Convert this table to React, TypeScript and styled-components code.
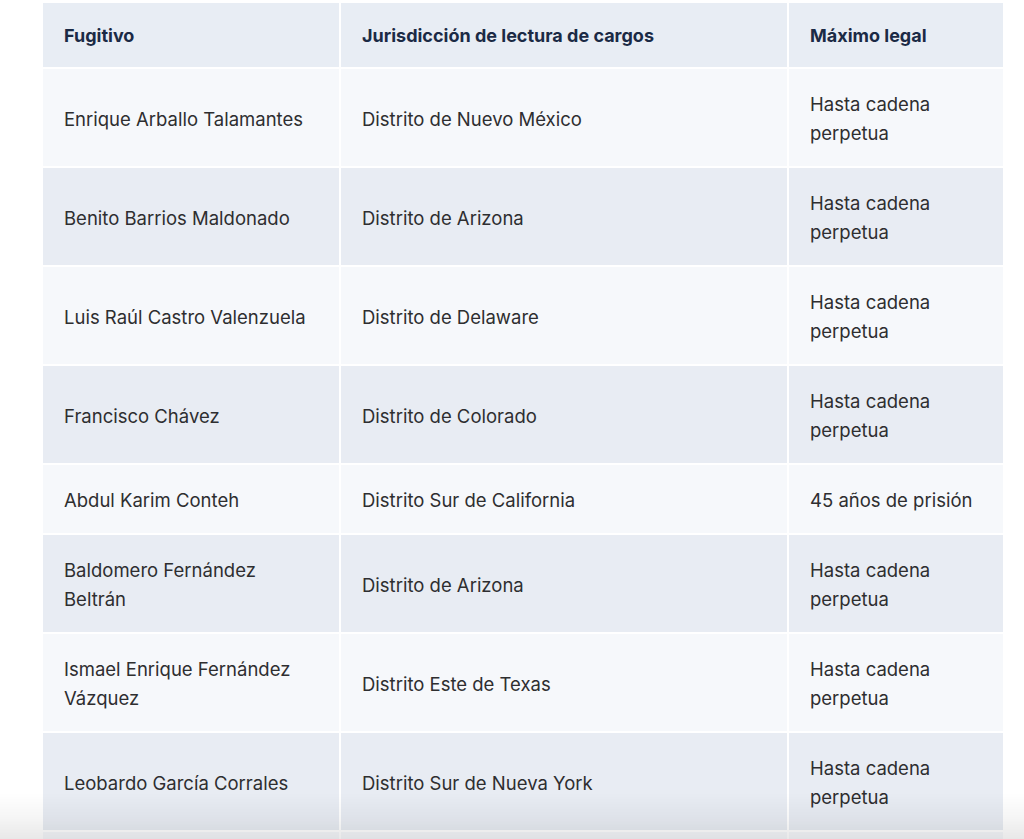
import * as React from "react";
import styled, { createGlobalStyle } from "styled-components";

const GlobalStyle = createGlobalStyle`
  html, body {
    margin: 0;
    padding: 0;
    background: #ffffff;
  }
  body {
    font-family: "Inter", "Noto Sans", sans-serif;
    -webkit-font-smoothing: antialiased;
  }
`;

const Page = styled.div`
  padding: 3px 21px 0 43px;
  height: 839px;
  overflow: hidden;
  box-sizing: border-box;
`;

const Table = styled.div`
  display: grid;
  grid-template-columns: 296px 446px 214px;
  gap: 2px;
  background: #ffffff;
`;

const HeadCell = styled.div`
  background: #e8edf4;
  color: #1b2a45;
  font-weight: 700;
  font-size: 18px;
  line-height: 28px;
  padding: 19px 21px 17px;
`;

const Cell = styled.div<{ $shade: boolean }>`
  display: flex;
  align-items: center;
  background: ${(p) => (p.$shade ? "#e8ecf3" : "#f6f8fb")};
  color: #2e2e30;
  font-size: 18.5px;
  line-height: 29px;
  padding: 21px 21px 18px;
  min-height: 29px;
`;

const BottomFade = styled.div`
  position: fixed;
  left: 0;
  right: 0;
  bottom: 0;
  height: 46px;
  pointer-events: none;
  background: linear-gradient(
    to bottom,
    rgba(0, 0, 0, 0) 0%,
    rgba(0, 0, 0, 0.04) 55%,
    rgba(0, 0, 0, 0.09) 100%
  );
`;

interface IRow {
  name: string;
  district: string;
  max: string;
}

const rows: IRow[] = [
  { name: "Enrique Arballo Talamantes", district: "Distrito de Nuevo México", max: "Hasta cadena perpetua" },
  { name: "Benito Barrios Maldonado", district: "Distrito de Arizona", max: "Hasta cadena perpetua" },
  { name: "Luis Raúl Castro Valenzuela", district: "Distrito de Delaware", max: "Hasta cadena perpetua" },
  { name: "Francisco Chávez", district: "Distrito de Colorado", max: "Hasta cadena perpetua" },
  { name: "Abdul Karim Conteh", district: "Distrito Sur de California", max: "45 años de prisión" },
  { name: "Baldomero Fernández Beltrán", district: "Distrito de Arizona", max: "Hasta cadena perpetua" },
  { name: "Ismael Enrique Fernández Vázquez", district: "Distrito Este de Texas", max: "Hasta cadena perpetua" },
  { name: "Leobardo García Corrales", district: "Distrito Sur de Nueva York", max: "Hasta cadena perpetua" },
  { name: "", district: "", max: "" },
];

export default function App() {
  return (
    <>
      <GlobalStyle />
      <Page>
        <Table>
          <HeadCell>Fugitivo</HeadCell>
          <HeadCell>Jurisdicción de lectura de cargos</HeadCell>
          <HeadCell>Máximo legal</HeadCell>
          {rows.map((r, i) => (
            <React.Fragment key={i}>
              <Cell $shade={i % 2 === 1}>{r.name}</Cell>
              <Cell $shade={i % 2 === 1}>{r.district}</Cell>
              <Cell $shade={i % 2 === 1}>{r.max}</Cell>
            </React.Fragment>
          ))}
        </Table>
      </Page>
      <BottomFade />
    </>
  );
}
